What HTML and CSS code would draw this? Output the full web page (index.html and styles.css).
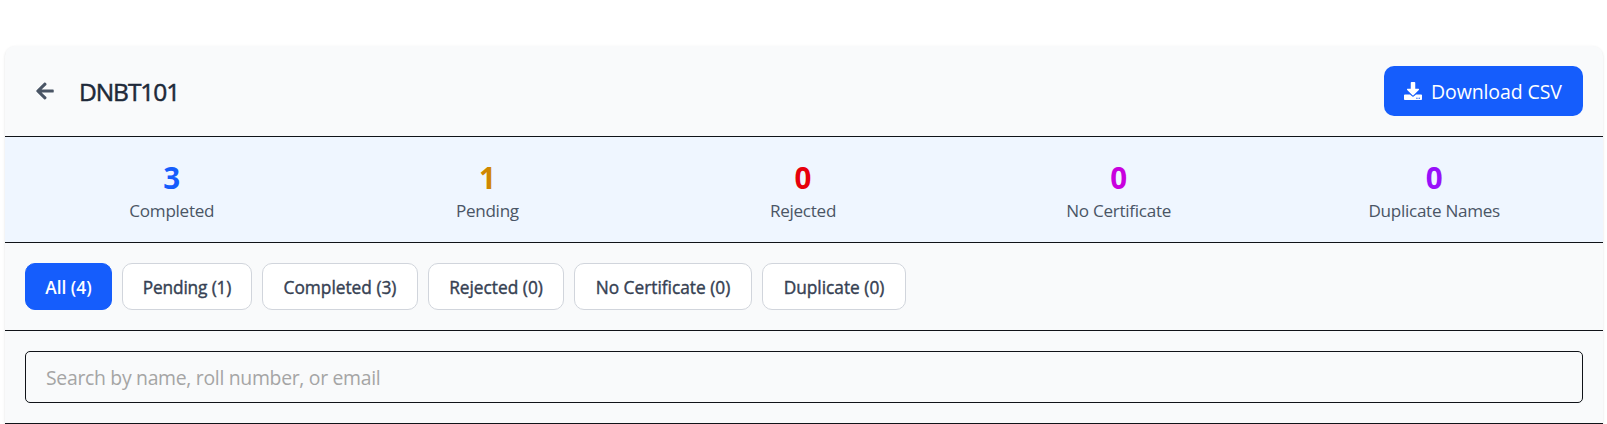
FILE: index.html
```
<!DOCTYPE html>
<html lang="en"><head><meta charset="utf-8"><title>DNBT101</title><link rel="stylesheet" href="styles.css"></head>
<body>
<main class="card">
<header class="header">
<div class="heading">
<button class="back" aria-label="Back"><svg class="back-icon" viewBox="0 0 448 512" fill="currentColor"><path d="M257.5 445.1l-22.2 22.2c-9.4 9.4-24.6 9.4-33.900 0L7 273c-9.400-9.400-9.400-24.600 0-33.900L201.400 44.700c9.400-9.400 24.600-9.400 33.900 0l22.200 22.200c9.500 9.500 9.300 25-.400 34.300L136.600 216H424c13.300 0 24 10.700 24 24v32c0 13.300-10.700 24-24 24H136.600l120.500 114.800c9.800 9.300 10 24.800.400 34.300z"/></svg></button>
<h1 class="title">DNBT101</h1>
</div>
<button class="download"><svg class="download-icon" viewBox="0 0 512 512" fill="currentColor"><path d="M216 0h80c13.300 0 24 10.700 24 24v168h87.700c17.800 0 26.700 21.500 14.100 34.100L269.700 378.300c-7.500 7.500-19.800 7.500-27.300 0L90.100 226.100c-12.600-12.600-3.700-34.100 14.100-34.100H192V24c0-13.300 10.700-24 24-24zm296 376v112c0 13.300-10.700 24-24 24H24c-13.300 0-24-10.700-24-24V376c0-13.300 10.700-24 24-24h146.700l49 49c20.100 20.100 52.500 20.100 72.600 0l49-49H488c13.300 0 24 10.700 24 24zm-124 88c0-11-9-20-20-20s-20 9-20 20 9 20 20 20 20-9 20-20zm64 0c0-11-9-20-20-20s-20 9-20 20 9 20 20 20 20-9 20-20z"/></svg><span class="download-text">Download CSV</span></button>
</header>
<section class="stats">
<div class="stat"><div class="value completed">3</div><div class="label">Completed</div></div>
<div class="stat"><div class="value pending">1</div><div class="label">Pending</div></div>
<div class="stat"><div class="value rejected">0</div><div class="label">Rejected</div></div>
<div class="stat"><div class="value missing">0</div><div class="label">No Certificate</div></div>
<div class="stat"><div class="value duplicate">0</div><div class="label">Duplicate Names</div></div>
</section>
<nav class="filters">
<button class="filter filter-all">All (4)</button>
<button class="filter filter-pending">Pending (1)</button>
<button class="filter filter-completed">Completed (3)</button>
<button class="filter filter-rejected">Rejected (0)</button>
<button class="filter filter-missing">No Certificate (0)</button>
<button class="filter filter-duplicate">Duplicate (0)</button>
</nav>
<section class="search"><input class="search-input" type="text" placeholder="Search by name, roll number, or email"></section>
</main>
</body></html>
```
FILE: styles.css
```
* { box-sizing: border-box; margin: 0; }
body { background: #fff; font-family: "Open Sans", "Noto Sans", sans-serif; font-size: 20px; line-height: 30px; overflow: hidden; }
button, input { font: inherit; }
.card { margin: 46px 4px 0 5px; height: 378px; background: #f9fafb; border-radius: 10px 10px 0 0; box-shadow: 0 1px 3px rgba(0,0,0,.1), 0 1px 2px -1px rgba(0,0,0,.1); overflow: hidden; }
.header { display: flex; justify-content: space-between; align-items: center; height: 91px; padding: 20px; border-bottom: 1px solid #101318; }
.heading { display: flex; align-items: center; gap: 14px; }
.back { display: flex; padding: 10px; border: 0; background: none; color: #4a5565; }
.back-icon { width: 20px; height: 20px; }
.title { font-size: 24.5px; line-height: 35px; font-weight: 400; -webkit-text-stroke: .5px; color: #1e2939; letter-spacing: -1.05px; }
.download { display: flex; align-items: center; gap: 9px; width: 199px; height: 50px; padding: 0 20px; border: 0; border-radius: 10px; background: #155dfc; color: #fff; white-space: nowrap; }
.download-icon { width: 18px; height: 18px; flex: none; }
.download-text { padding-top: 2px; font-size: 19.5px; letter-spacing: -.1px; }
.stats { display: grid; grid-template-columns: repeat(5, 1fr); gap: 20px; height: 106px; padding: 20px 21px 20px 19px; background: #eff6ff; border-bottom: 1px solid #101318; text-align: center; }
.value { font-size: 29.5px; line-height: 41px; font-weight: 700; }
.label { font-size: 17.1px; line-height: 25px; letter-spacing: -.28px; color: #4a5565; }
.completed { color: #155dfc; }
.pending { color: #d08700; }
.rejected { color: #e7000b; }
.missing { color: #c800de; }
.duplicate { color: #9810fa; }
.filters { display: flex; gap: 10px; height: 88px; padding: 20px; border-bottom: 1px solid #101318; }
.filter { height: 47px; padding: 2px 0 0; border: 1px solid #d1d5dc; border-radius: 10px; background: #fff; color: #364153; font-size: 17.3px; line-height: 25px; font-weight: 400; -webkit-text-stroke: .4px; white-space: nowrap; }
.filter-all { width: 87px; background: #155dfc; border-color: #155dfc; color: #fff; font-weight: 600; -webkit-text-stroke: 0; }
.filter-pending { width: 130px; letter-spacing: -.15px; }
.filter-completed { width: 156px; }
.filter-rejected { width: 136px; }
.filter-missing { width: 178px; }
.filter-duplicate { width: 144px; }
.search { height: 93px; padding: 20px; border-bottom: 1px solid #101318; }
.search-input { display: block; width: 100%; height: 52px; padding: 0 19px 0 20px; border: 1px solid #101318; border-radius: 5px; background: transparent; font-size: 19.4px; letter-spacing: -.3px; outline: 0; }
.search-input::placeholder { color: #a5a5a5; opacity: 1; }
```
